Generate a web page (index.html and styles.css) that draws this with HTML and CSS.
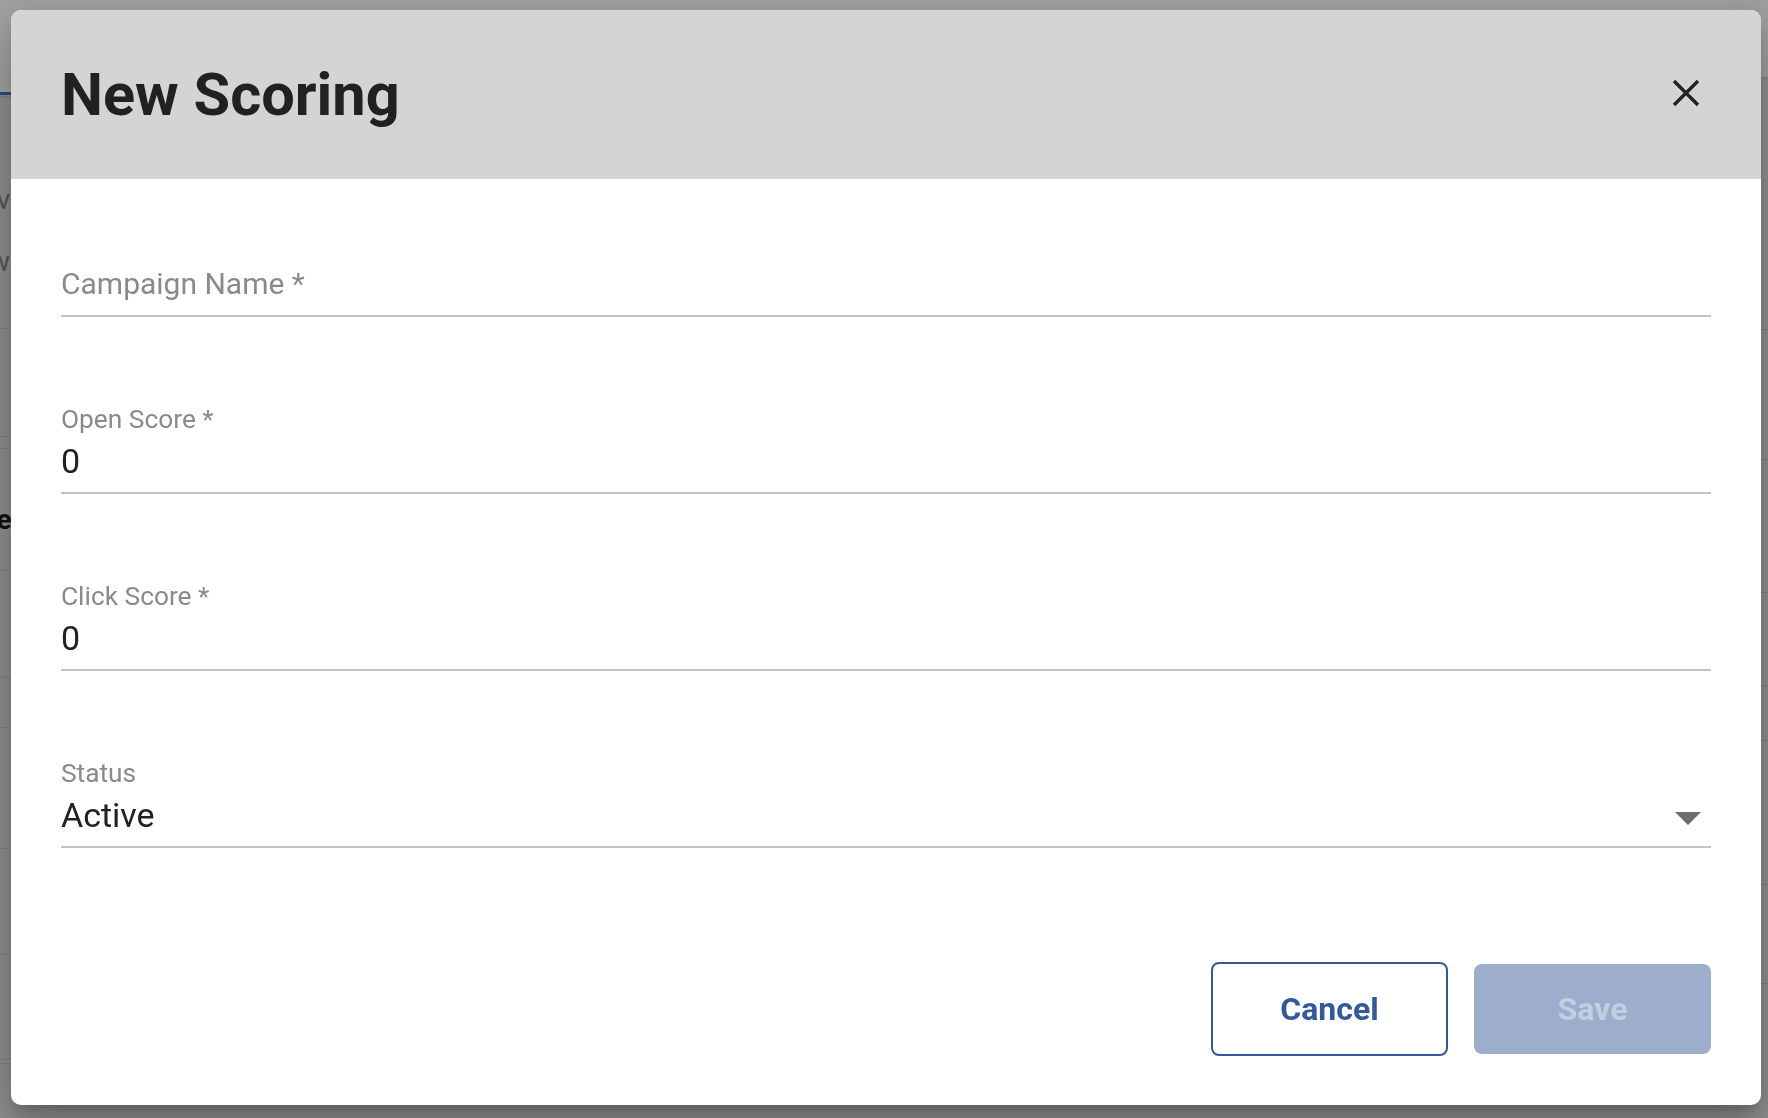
FILE: index.html
```html
<!DOCTYPE html>
<html lang="en">
<head>
<meta charset="utf-8">
<title>New Scoring</title>
<link rel="stylesheet" href="styles.css">
</head>
<body>
<div class="page">
  <div class="side side-left">
    <div class="topbar-left"></div>
    <div class="tab-line"></div>
    <div class="header-rule"></div>
    <div class="bg-row l1">
      <div class="bg-text first">vo</div>
      <div class="bg-text second">wo</div>
    </div>
    <div class="bg-row l2"></div>
    <div class="bg-row l3"></div>
    <div class="bg-row l4"><div class="bg-text strong">es</div></div>
    <div class="bg-row l5"></div>
    <div class="bg-row l6"></div>
    <div class="bg-row l7"></div>
    <div class="bg-row l8"></div>
    <div class="bg-row l9"></div>
    <div class="bg-row l10"></div>
    <div class="bg-row l11"></div>
  </div>
  <div class="side-middle">
    <div class="topbar-middle"></div>
  </div>
  <div class="side side-right">
    <div class="bg-row topbar-right"></div>
    <div class="bg-row r1"></div>
    <div class="bg-row r2"></div>
    <div class="bg-row r3"></div>
    <div class="bg-row r4"></div>
    <div class="bg-row r5"></div>
    <div class="bg-row r6"></div>
    <div class="bg-row r7"></div>
  </div>
</div>

<div class="modal" role="dialog" aria-labelledby="dlg-title">
  <header class="modal-header">
    <h1 class="modal-title" id="dlg-title">New Scoring</h1>
    <button class="close-btn" aria-label="Close">
      <svg width="28" height="28" viewBox="0 0 28 28"><path d="M2 2L26 26M26 2L2 26" stroke="#222" stroke-width="3.4" fill="none"/></svg>
    </button>
  </header>
  <div class="modal-body">
    <div class="field field-empty">
      <div class="field-input"><span class="placeholder">Campaign Name *</span></div>
    </div>
    <div class="field">
      <span class="field-label">Open Score *</span>
      <div class="field-input"><span class="value">0</span></div>
    </div>
    <div class="field">
      <span class="field-label">Click Score *</span>
      <div class="field-input"><span class="value">0</span></div>
    </div>
    <div class="field">
      <span class="field-label">Status</span>
      <div class="field-input"><span class="value">Active</span>
        <svg class="dropdown-arrow" width="26" height="13" viewBox="0 0 26 13"><path d="M0 0H26L13 13Z" fill="#6e6e6e"/></svg>
      </div>
    </div>
  </div>
  <footer class="modal-footer">
    <button class="btn btn-outline">Cancel</button>
    <button class="btn btn-filled" disabled>Save</button>
  </footer>
</div>
</body>
</html>
```
FILE: styles.css
```css
html, body {
  margin: 0;
  padding: 0;
}
body {
  background: #8f8f8f;
  font-family: Roboto, "Liberation Sans", Arial, sans-serif;
  height: 1118px;
  overflow: hidden;
}

/* ---------- dimmed page behind the dialog ---------- */
.page {
  display: flex;
  height: 1118px;
}
.side {
  width: 40px;
  flex: none;
  overflow: hidden;
  display: flex;
  flex-direction: column;
}
.side-middle {
  flex: 1;
  display: flex;
  flex-direction: column;
}
.topbar-middle { height: 92px; background: #a2a2a2; }
.bg-row {
  flex: none;
  box-sizing: border-box;
  border-bottom: 1px solid #808080;
}
.topbar-left { height: 92px; background: #a2a2a2; flex: none; }
.tab-line { height: 3px; background: #2c4a7b; flex: none; }
.header-rule { height: 2px; margin-top: 1px; background: #858585; flex: none; }

.l1 { height: 231px; padding-top: 82px; }
.l2 { height: 108px; }
.l3 { height: 12px; }
.l4 { height: 122px; padding-top: 51px; }
.l5 { height: 106px; }
.l6 { height: 2px; }
.l7 { height: 49px; }
.l8 { height: 121px; }
.l9 { height: 106px; }
.l10 { height: 105px; }
.l11 { height: 4px; }

.topbar-right { height: 78px; background: #a0a0a0; }
.r1 { height: 252px; }
.r2 { height: 130px; }
.r3 { height: 133px; }
.r4 { height: 93px; }
.r5 { height: 55px; }
.r6 { height: 144px; }
.r7 { height: 99px; }

.bg-text {
  display: flex;
  justify-content: flex-end;
  padding-right: 14px;
  font-size: 28px;
  line-height: 40px;
  height: 40px;
  white-space: nowrap;
  color: #555;
}
.bg-text.second { margin-top: 22px; }
.bg-text.strong { color: #111; font-weight: 700; }

/* ---------- dialog ---------- */
.modal {
  position: fixed;
  left: 11px;
  top: 10px;
  width: 1750px;
  height: 1095px;
  background: #fff;
  border-radius: 10px;
  overflow: hidden;
  display: flex;
  flex-direction: column;
  box-shadow: 0 11px 15px -7px rgba(0,0,0,0.2), 0 24px 38px 3px rgba(0,0,0,0.14), 0 9px 46px 8px rgba(0,0,0,0.12);
}
.modal-header {
  flex: none;
  height: 169px;
  box-sizing: border-box;
  background: #d4d4d4;
  display: flex;
  align-items: center;
  justify-content: space-between;
  padding: 0 61px 0 50px;
}
.modal-title {
  margin: 0;
  padding-top: 1px;
  font-size: 59.5px;
  line-height: 60px;
  font-weight: 700;
  color: #212121;
}
.close-btn {
  background: none;
  border: none;
  padding: 0;
  width: 28px;
  height: 28px;
  margin-bottom: 3px;
  cursor: pointer;
  display: block;
}
.close-btn svg { display: block; }

.modal-body {
  display: flex;
  flex-direction: column;
  gap: 87px;
  padding: 48px 50px 0 50px;
}
.field {
  height: 90px;
  box-sizing: border-box;
  border-bottom: 2px solid #c4c4c4;
}
.field-empty { padding-top: 37px; }
.field-label {
  display: block;
  font-size: 26.3px;
  line-height: 30px;
  height: 30px;
  margin-bottom: 7px;
  color: #8a8a8a;
}
.field-input {
  height: 40px;
  display: flex;
  align-items: center;
  justify-content: space-between;
  font-size: 34px;
  line-height: 40px;
  color: #212121;
}
.placeholder {
  font-size: 30px;
  color: #8a8a8a;
}
.dropdown-arrow {
  display: block;
  margin: 6px 10px 0 0;
}

.modal-footer {
  margin-top: auto;
  display: flex;
  justify-content: flex-end;
  align-items: center;
  gap: 26px;
  padding: 0 50px 49px 0;
}
.btn {
  width: 237px;
  box-sizing: border-box;
  font-family: Roboto, "Liberation Sans", Arial, sans-serif;
  font-size: 32px;
  font-weight: 700;
  border-radius: 8px;
  padding: 0;
}
.btn-outline {
  height: 94px;
  border: 2px solid #34599b;
  background: #fff;
  color: #34599b;
}
.btn-filled {
  height: 90px;
  border: none;
  background: #9daecd;
  color: #c4cee2;
}
```
